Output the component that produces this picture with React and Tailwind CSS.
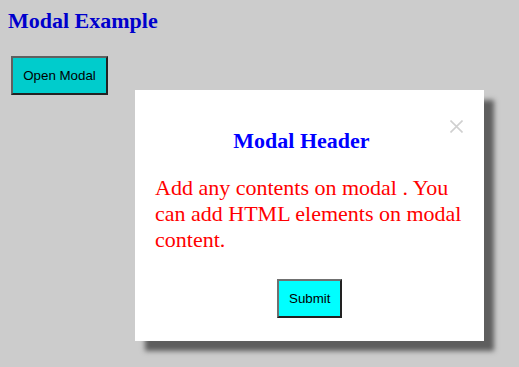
import React from "react";

function ModalBox() {
  return (
    <div className="absolute left-[135px] top-[90px] w-[349px] bg-white shadow-[10px_10px_5px_#5e5e5e] pt-[37px] pb-[23px] px-5">
      {/* close button */}
      <button className="absolute left-[315px] top-[30px] w-[13px] h-[13px]" aria-label="close">
        <svg width="13" height="13" viewBox="0 0 13 13">
          <path d="M0.5 0.5 L12.5 12.5 M12.5 0.5 L0.5 12.5" stroke="#d0d0d0" strokeWidth="1.6" fill="none" />
        </svg>
      </button>
      <h2 className="text-center pr-4 text-[22px] font-bold text-[#0000ff] font-['Liberation_Serif',serif] leading-[27px]">
        Modal Header
      </h2>
      <p className="mt-[21px] text-[22px] leading-[26px] text-[#ff0000] font-['Liberation_Serif',serif]">
        Add any contents on modal . You can add HTML elements on modal content.
      </p>
      <div className="flex justify-center mt-[26px]">
        <button className="bg-[#00ffff] border-2 border-t-[#707070] border-l-[#707070] border-b-[#222] border-r-[#222] px-[10px] h-[39px] w-[65px] text-[13.33px] text-black font-['Liberation_Sans',Arial,sans-serif]">
          Submit
        </button>
      </div>
    </div>
  );
}

export default function App() {
  return (
    <div className="relative w-[519px] h-[367px] bg-[#cccccc] p-2 overflow-hidden">
      <h1 className="text-[22px] font-bold text-[#0000cc] font-['Liberation_Serif',serif] leading-[25px]">
        Modal Example
      </h1>
      <button className="ml-[3px] mt-[23px] bg-[#00cccc] border-2 border-t-[#606060] border-l-[#606060] border-b-[#222] border-r-[#222] px-[10px] h-[39px] w-[97px] text-[13.33px] text-black font-['Liberation_Sans',Arial,sans-serif]">
        Open Modal
      </button>
      <ModalBox />
    </div>
  );
}
